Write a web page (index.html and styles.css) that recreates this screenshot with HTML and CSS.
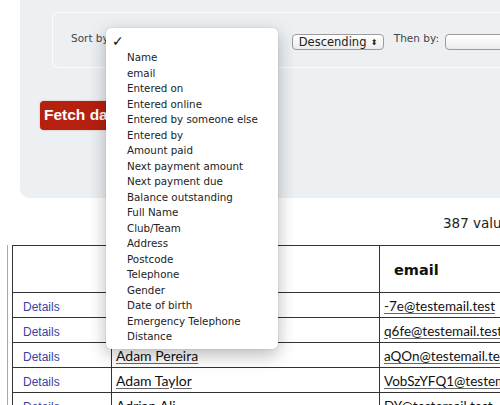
FILE: index.html
```html
<!DOCTYPE html>
<html>
<head>
<meta charset="utf-8">
<link rel="stylesheet" href="styles.css">
</head>
<body>
<div class="page">
  <div class="panel">
    <div class="filters">
      <span class="lbl">Sort by</span>
      <span class="sel sel-sort"></span>
      <span class="sel sel-dir">Descending <span class="arrows">&#x2B0D;</span></span>
      <span class="lbl lbl-then">Then by:</span>
      <span class="sel sel-then"></span>
    </div>
    <button class="fetch">Fetch data</button>
  </div>
  <div class="count">387 values</div>
  <div class="tablewrap">
    <table class="data">
      <tr class="head"><th class="c1"></th><th class="c2">Name</th><th class="c3">email</th></tr>
      <tr><td><a class="det">Details</a></td><td><a class="nm">Aaron Smith</a></td><td><a class="em">-7e@testemail.test</a></td></tr>
      <tr><td><a class="det">Details</a></td><td><a class="nm">Abigail Brown</a></td><td><a class="em">q6fe@testemail.test</a></td></tr>
      <tr><td><a class="det">Details</a></td><td><a class="nm">Adam Pereira</a></td><td><a class="em">aQOn@testemail.test</a></td></tr>
      <tr><td><a class="det">Details</a></td><td><a class="nm">Adam Taylor</a></td><td><a class="em">VobSzYFQ1@testemail.test</a></td></tr>
      <tr><td><a class="det">Details</a></td><td><a class="nm">Adrian Ali</a></td><td><a class="em">DY@testemail.test</a></td></tr>
    </table>
  </div>
  <div class="menu">
    <div class="item check">&#x2713;</div>
    <div class="item">Name</div>
    <div class="item">email</div>
    <div class="item">Entered on</div>
    <div class="item">Entered online</div>
    <div class="item">Entered by someone else</div>
    <div class="item">Entered by</div>
    <div class="item">Amount paid</div>
    <div class="item">Next payment amount</div>
    <div class="item">Next payment due</div>
    <div class="item">Balance outstanding</div>
    <div class="item">Full Name</div>
    <div class="item">Club/Team</div>
    <div class="item">Address</div>
    <div class="item">Postcode</div>
    <div class="item">Telephone</div>
    <div class="item">Gender</div>
    <div class="item">Date of birth</div>
    <div class="item">Emergency Telephone</div>
    <div class="item">Distance</div>
  </div>
</div>
</body>
</html>
```

FILE: styles.css
```css
html, body {
  margin: 0;
  padding: 0;
  background: #fff;
}
.page {
  position: relative;
  width: 500px;
  height: 405px;
  overflow: hidden;
  font-family: "DejaVu Sans", sans-serif;
}
.panel {
  margin-left: 20px;
  width: 480px;
  height: 198px;
  box-sizing: border-box;
  background: #edf0f3;
  border-bottom-left-radius: 9px;
  padding-top: 12px;
}
.filters {
  margin-left: 32px;
  width: 448px;
  height: 56px;
  box-sizing: border-box;
  border: 1px solid #fbfcfd;
  border-right: none;
  border-radius: 6px 0 0 6px;
  display: flex;
  align-items: center;
  padding-left: 18px;
  padding-bottom: 4px;
  white-space: nowrap;
}
.lbl {
  font-size: 10.5px;
  color: #444;
  flex-shrink: 0;
}
.sel {
  display: inline-flex;
  align-items: center;
  flex-shrink: 0;
  height: 16px;
  box-sizing: border-box;
  border: 1px solid #9c9c9c;
  border-radius: 4px;
  background: linear-gradient(#ffffff, #ececec);
  font-size: 11.5px;
  color: #222;
  margin-top: 8px;
}
.sel-sort {
  width: 160px;
  margin-left: 6px;
}
.sel-dir {
  width: 92px;
  margin-left: 17px;
  padding-left: 6px;
}
.arrows {
  font-size: 8px;
  margin-left: auto;
  margin-right: 5px;
}
.lbl-then {
  margin-left: 10px;
}
.sel-then {
  width: 80px;
  margin-left: 6px;
}
.fetch {
  display: block;
  margin: 33px 0 0 20px;
  width: 100px;
  height: 29px;
  border: none;
  border-radius: 4px;
  background: #b5200f;
  color: #fff;
  font-family: "Liberation Sans", sans-serif;
  font-weight: bold;
  font-size: 15.5px;
  text-align: left;
  padding: 0 0 1px 4px;
  box-shadow: 0 0 2px rgba(180, 40, 20, 0.4);
}
.count {
  margin-top: 15px;
  padding-left: 443px;
  height: 20px;
  line-height: 20px;
  font-family: "DejaVu Sans", sans-serif;
  font-size: 13.5px;
  color: #222;
  white-space: nowrap;
}
.tablewrap {
  margin-top: 12px;
  margin-left: 7px;
  border-left: 1px solid #aaa;
  padding-left: 4px;
}
.data {
  border-collapse: collapse;
  table-layout: fixed;
  width: 560px;
}
.data td, .data th {
  border: 1px solid #333;
  padding: 0 0 0 4px;
  text-align: left;
  white-space: nowrap;
  overflow: hidden;
}
.data tr { height: 25px; }
.data tr.head { height: 47px; }
.data th {
  font-family: "DejaVu Sans", sans-serif;
  font-weight: bold;
  font-size: 14.5px;
  color: #111;
  text-indent: 10px;
  padding-top: 2px;
}
.c1 { width: 94px; }
.c2 { width: 263px; }
.det {
  font-family: "Liberation Sans", sans-serif;
  font-size: 12px;
  color: #3b3fa6;
  padding-left: 6px;
}
.nm, .em {
  font-family: "Lato", sans-serif;
  color: #111;
  text-decoration: underline;
  text-decoration-color: #666;
  text-underline-offset: 2px;
}
.nm { font-size: 14px; }
.em { font-size: 13.5px; }
.menu {
  position: absolute;
  left: 106px;
  top: 28px;
  width: 172px;
  height: 321px;
  box-sizing: border-box;
  background: #fff;
  border-radius: 5px;
  box-shadow: 0 6px 18px rgba(0, 0, 0, 0.28), 0 0 1px rgba(0, 0, 0, 0.35);
  padding-top: 5px;
}
.item {
  height: 15.5px;
  line-height: 15.5px;
  padding-left: 21px;
  font-size: 10.3px;
  color: #222;
  white-space: nowrap;
}
.item.check {
  height: 17px;
  line-height: 17px;
  padding-left: 6px;
  font-size: 14px;
  font-weight: bold;
  color: #111;
}
```
